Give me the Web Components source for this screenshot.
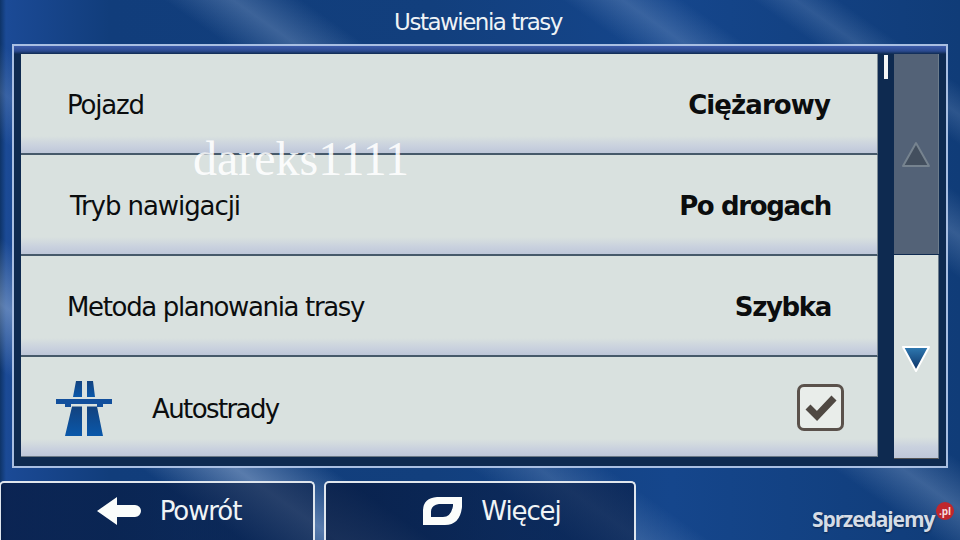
<!DOCTYPE html>
<html lang="pl">
<head>
<meta charset="utf-8">
<title>Ustawienia trasy</title>
<style>
  html, body { margin: 0; padding: 0; }
  body { width: 960px; height: 540px; overflow: hidden; font-family: "DejaVu Sans", sans-serif; }
</style>
</head>
<body>
<nav-screen heading="Ustawienia trasy">
  <route-row label="Pojazd" value="Ciężarowy" lx="46" rx="47" ls="-1.2" vls="-0.9"></route-row>
  <route-row label="Tryb nawigacji" value="Po drogach" lx="49" rx="46" ls="-1.07" vls="-1.35"></route-row>
  <route-row label="Metoda planowania trasy" value="Szybka" lx="46" rx="46" ls="-1.35" vls="-1.35"></route-row>
  <route-row label="Autostrady" checked motorway ls="-1.6"></route-row>
  <nav-button slot="footer" label="Powrót" icon="back" w="316"></nav-button>
  <nav-button slot="footer" label="Więcej" icon="more" w="312"></nav-button>
</nav-screen>

<script>
class NavScreen extends HTMLElement {
  constructor() {
    super();
    this.attachShadow({ mode: "open" });
  }

  connectedCallback() {
    const title = this.getAttribute("heading") || "";
    this.shadowRoot.innerHTML = `
      <style>
        :host {
          display: flex;
          flex-direction: column;
          position: relative;
          width: 960px;
          height: 540px;
          overflow: hidden;
          color: #fff;
          background:
            linear-gradient(35deg,
              rgba(160,185,220,0) 14%, rgba(160,185,220,.5) 19.500%, rgba(160,185,220,0) 25%,
              rgba(160,185,220,0) 33%, rgba(160,185,220,.22) 37%, rgba(160,185,220,0) 41%,
              rgba(160,185,220,0) 54%, rgba(160,185,220,.3) 58%, rgba(160,185,220,0) 62%,
              rgba(160,185,220,0) 77%, rgba(160,185,220,.26) 80.500%, rgba(160,185,220,0) 84%,
              rgba(160,185,220,0) 88%, rgba(160,185,220,.2) 90.500%, rgba(160,185,220,0) 93%),
            linear-gradient(90deg, #0e3468 0, #1b4a96 6px, #113d7b 110px, #123f7d 45%, #15468c 70%, #103c78 100%);
        }
        .title {
          height: 44px;
          line-height: 45px;
          padding-right: 4px;
          text-align: center;
          font-size: 23px;
          color: #eef3f6;
          letter-spacing: -1.5px;
          flex: none;
        }
        .frame {
          flex: none;
          box-sizing: border-box;
          margin-left: 12px;
          width: 936px;
          height: 424px;
          border: 2px solid #a9bfe2;
          background: linear-gradient(#3d5cab 0, #2b4a90 5px, #0e2a50 8px);
          padding: 8px 8px 7px 7px;
          display: flex;
        }
        .rows {
          flex: none;
          width: 857px;
          display: flex;
          flex-direction: column;
        }
        .track {
          flex: none;
          width: 16px;
          position: relative;
        }
        .thumb {
          position: absolute;
          left: 6px;
          top: 1px;
          width: 4px;
          height: 24px;
          background: #f4f6f6;
        }
        .scroll {
          flex: none;
          width: 45px;
          display: flex;
          flex-direction: column;
          gap: 1px;
        }
        .up, .down {
          flex: 1 1 0;
          display: flex;
          justify-content: center;
          border-right: 1px solid #6c7c8c;
        }
        .up {
          background: #536277;
          align-items: flex-start;
          padding-top: 87px;
        }
        .down {
          padding-top: 90px;
          background: linear-gradient(#d9e1df 0 182px, #c9d1de 192px, #bec7d9 100%);
          border-bottom: 1px solid #555;
        }
        footer {
          flex: none;
          display: flex;
          gap: 9px;
          margin-top: 13px;
          margin-left: -1px;
        }
        .logo {
          position: absolute;
          left: 812px;
          top: 505px;
          font: bold 21px "Open Sans", sans-serif;
          letter-spacing: -1.1px;
          color: #d5dce6;
          text-shadow: 0 1px 2px #0a2347;
        }
        .pl {
          position: absolute;
          left: 936px;
          top: 502px;
          width: 18px;
          height: 18px;
          border-radius: 50%;
          background: #c0272d;
          color: #f5dede;
          font: bold 10px/18px "Open Sans", sans-serif;
          text-align: center;
        }
        .mark {
          position: absolute;
          left: 193px;
          top: 131px;
          font: 48px "Liberation Serif", serif;
          color: rgba(255,255,255,.9);
        }
      </style>
      <div class="title">${title}</div>
      <div class="frame">
        <div class="rows"><slot></slot></div>
        <div class="track"><div class="thumb"></div></div>
        <div class="scroll">
          <div class="up">
            <svg width="30" height="28" viewBox="0 0 30 28"><path d="M15 2 L28 25 H2 Z" fill="#434f5e" stroke="#76838f" stroke-width="2" stroke-linejoin="round"/></svg>
          </div>
          <div class="down">
            <svg width="30" height="28" viewBox="0 0 30 28">
              <defs><linearGradient id="d" x1="0" y1="0" x2="0" y2="1"><stop offset="0" stop-color="#2f7ab2"/><stop offset="1" stop-color="#0b2f63"/></linearGradient></defs>
              <path d="M2 2 H28 L15 26 Z" fill="url(#d)" stroke="#fff" stroke-width="2" stroke-linejoin="round"/>
            </svg>
          </div>
        </div>
      </div>
      <footer><slot name="footer"></slot></footer>
      <div class="mark">dareks1111</div>
      <div class="logo">Sprzedajemy</div>
      <div class="pl">.pl</div>
    `;
  }
}

class RouteRow extends HTMLElement {
  constructor() {
    super();
    this.attachShadow({ mode: "open" });
  }

  connectedCallback() {
    const label = this.getAttribute("label") || "";
    const value = this.getAttribute("value");
    const lx = this.getAttribute("lx") || 47;
    const rx = this.getAttribute("rx") || 47;
    const ls = this.getAttribute("ls") || -1.3;
    const vls = this.getAttribute("vls") || -1;
    const icon = this.hasAttribute("motorway") ? `
      <svg class="mw" width="56" height="56" viewBox="0 0 56 56">
        <defs><linearGradient id="m" x1="0" y1="0" x2="0" y2="1"><stop offset="0" stop-color="#12427f"/><stop offset="1" stop-color="#0a58aa"/></linearGradient></defs>
        <path d="M20 0 H26 V16 H17 Z M31 0 H37 L39 16 H31 Z" fill="url(#m)"/>
        <path d="M0 18 H56 V23 H47 V26 H41 V23 H15 V26 H9 V23 H0 Z" fill="#124f9c"/>
        <path d="M16 25.500 H26 V55 H9 Z M31 25.500 H41 L47 55 H31 Z" fill="url(#m)"/>
      </svg>` : "";
    const check = this.hasAttribute("checked") ? `
      <div class="box">
        <svg width="34" height="30" viewBox="0 0 34 30"><path d="M4 15 L13 24 L30 6" fill="none" stroke="#4f4842" stroke-width="7"/></svg>
      </div>` : "";
    this.shadowRoot.innerHTML = `
      <style>
        :host {
          display: flex;
          align-items: center;
          box-sizing: border-box;
          flex: none;
          height: 101px;
          padding: 2px ${rx}px 0 ${lx}px;
          color: #0b0d0e;
          font-size: 26px;
          border-bottom: 2px solid #46596a;
          border-right: 1px solid #7e8b95;
          background: linear-gradient(#d9e1df 0 82px, #c9d1de 92px, #bec7d9 100%);
        }
        :host([motorway]) {
          height: 100px;
          border-bottom: 1px solid #6a7885;
          padding: 4px 33px 0 35px;
        }
        .label { flex: 1; letter-spacing: ${ls}px; }
        .value { font-weight: bold; letter-spacing: ${vls}px; }
        .mw { flex: none; margin-right: 40px; }
        .box {
          flex: none;
          box-sizing: border-box;
          width: 47px;
          height: 47px;
          margin-top: -3px;
          border: 3px solid #5a514b;
          border-radius: 7px;
          background: #e9edea;
          display: flex;
          align-items: center;
          justify-content: center;
        }
      </style>
      ${icon}
      <div class="label">${label}</div>
      ${value ? `<div class="value">${value}</div>` : ""}
      ${check}
    `;
  }
}

class NavButton extends HTMLElement {
  constructor() {
    super();
    this.attachShadow({ mode: "open" });
  }

  connectedCallback() {
    const icons = {
      back: `<svg width="44" height="28" viewBox="0 0 44 28"><path d="M0 14 L20 0 V8 H38 A6 6 0 0 1 38 20 H20 V28 Z" fill="#fbfdfb"/></svg>`,
      more: `<svg width="39" height="28" viewBox="0 0 39 28"><path fill-rule="evenodd" d="M0 28 V14 Q0 1 14 0 H39 V10 Q37 28 22 28 Z M8 20 H20 Q28 20 30 9 V7 H16 Q8 8 8 15 Z" fill="#fbfdfb"/></svg>`,
    };
    const w = this.getAttribute("w") || 300;
    this.shadowRoot.innerHTML = `
      <style>
        :host {
          display: flex;
          align-items: center;
          justify-content: center;
          gap: 19px;
          box-sizing: border-box;
          width: ${w}px;
          height: 62px;
          padding: 0 0 4px 24px;
          border: 2px solid #dfe6ee;
          border-bottom: none;
          border-radius: 5px 5px 0 0;
          color: #f0f4f6;
          font-size: 26px;
          letter-spacing: -1.1px;
          background: linear-gradient(90deg, rgba(7,27,66,.8), rgba(7,27,66,.62) 60%);
        }
      </style>
      ${icons[this.getAttribute("icon")] || ""}
      <span>${this.getAttribute("label") || ""}</span>
    `;
  }
}

customElements.define("nav-screen", NavScreen);
customElements.define("route-row", RouteRow);
customElements.define("nav-button", NavButton);
</script>
</body>
</html>
